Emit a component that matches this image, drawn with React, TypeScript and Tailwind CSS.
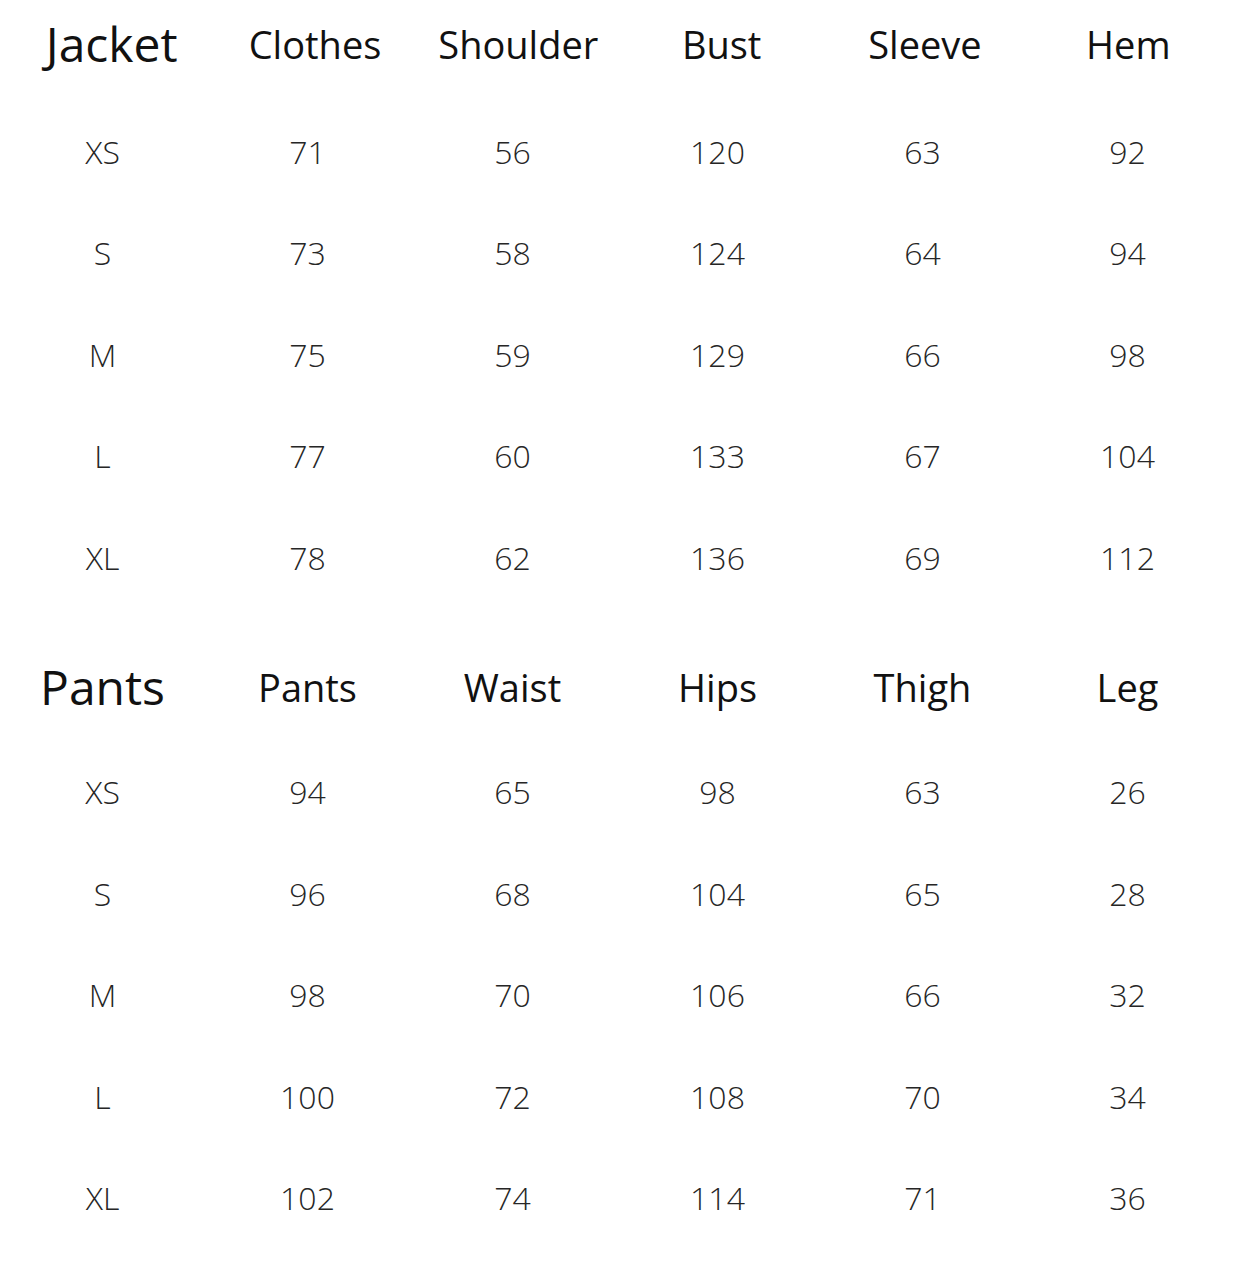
const jacket = {
  title: "Jacket",
  cols: ["Clothes", "Shoulder", "Bust", "Sleeve", "Hem"],
  rows: [
    ["XS", "71", "56", "120", "63", "92"],
    ["S", "73", "58", "124", "64", "94"],
    ["M", "75", "59", "129", "66", "98"],
    ["L", "77", "60", "133", "67", "104"],
    ["XL", "78", "62", "136", "69", "112"],
  ],
};

const pants = {
  title: "Pants",
  cols: ["Pants", "Waist", "Hips", "Thigh", "Leg"],
  rows: [
    ["XS", "94", "65", "98", "63", "26"],
    ["S", "96", "68", "104", "65", "28"],
    ["M", "98", "70", "106", "66", "32"],
    ["L", "100", "72", "108", "70", "34"],
    ["XL", "102", "74", "114", "71", "36"],
  ],
};

type Chart = typeof jacket;

function SizeTable({ chart, headClass }: { chart: Chart; headClass: string }) {
  return (
    <div className="w-[1230px]">
      <div className={`grid grid-cols-6 ${headClass}`}>
        <div className="flex items-center justify-center text-[48px] leading-none text-[#111]">
          {chart.title}
        </div>
        {chart.cols.map((c) => (
          <div key={c} className="flex items-center justify-center text-[38px] leading-none text-[#111]">
            {c}
          </div>
        ))}
      </div>
      {chart.rows.map((row) => (
        <div key={row[0]} className="grid grid-cols-6 h-[101.5px]">
          {row.map((v, i) => (
            <div
              key={i}
              className="flex items-center justify-center text-[32px] font-light leading-none text-[#262626]"
            >
              {v}
            </div>
          ))}
        </div>
      ))}
    </div>
  );
}

export default function App() {
  return (
    <div
      className="w-[1238px] h-[1264px] bg-white overflow-hidden"
      style={{ fontFamily: '"Open Sans", "Noto Sans", sans-serif' }}
    >
      <SizeTable chart={jacket} headClass="h-[101px] pb-[14px] pl-[10px]" />
      <div className="h-[30px]" />
      <SizeTable chart={pants} headClass="h-[103px] pb-[6px]" />
    </div>
  );
}
